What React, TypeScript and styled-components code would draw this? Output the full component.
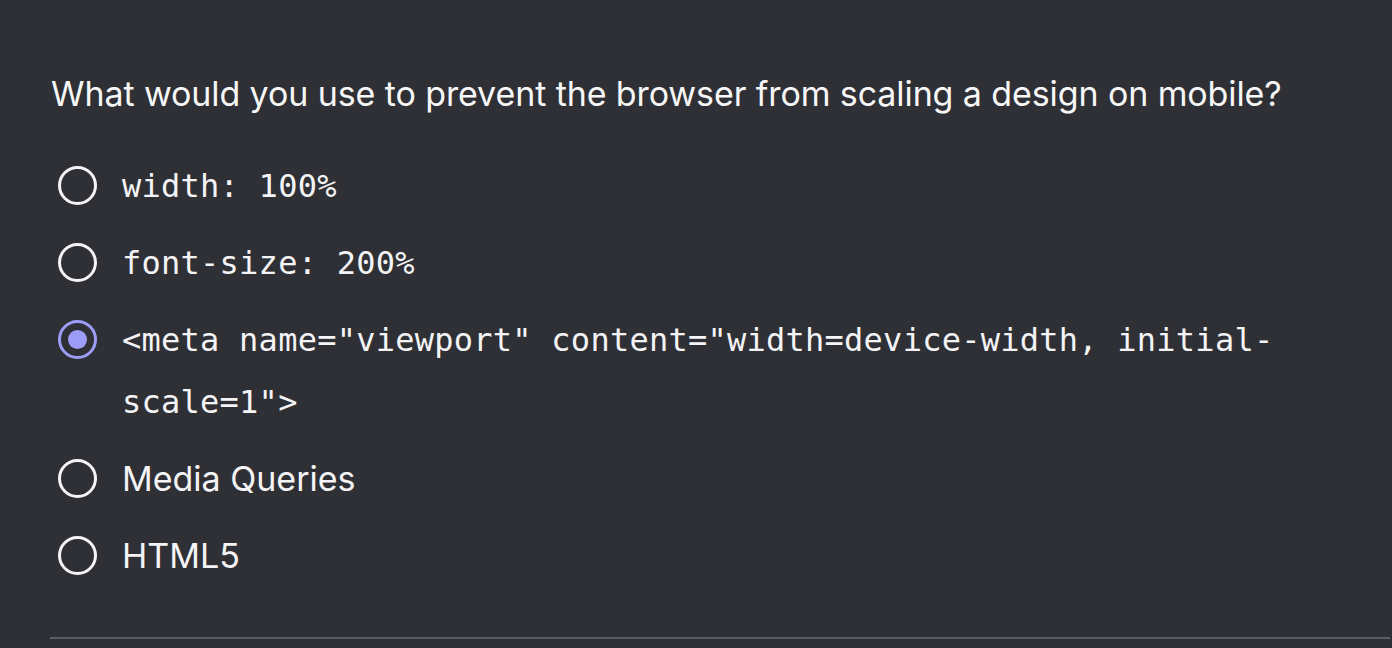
import React from "react";
import styled, { createGlobalStyle } from "styled-components";

const Global = createGlobalStyle`
  html, body { margin: 0; padding: 0; background: #2f3035; }
  body { font-family: Inter, "Liberation Sans", sans-serif; color: #f5f5f7; }
`;

const Page = styled.div`
  width: 1392px;
  height: 648px;
  overflow: hidden;
  background: #2f3035;
  box-sizing: border-box;
  padding: 70px 2px 0 50px;
`;

const Question = styled.h2`
  margin: 0 0 0 1px;
  font-size: 34px;
  font-weight: 400;
  line-height: 48px;
  color: #f7f7f8;
  letter-spacing: -0.1px;
`;

const Options = styled.div`
  display: flex;
  flex-direction: column;
  gap: 15px;
  margin-top: 37px;
  padding-right: 60px;
`;

const Option = styled.label`
  display: flex;
  align-items: flex-start;
  gap: 25px;
  padding-left: 8px;
  cursor: pointer;
`;

const Radio = styled.span<{ $checked?: boolean }>`
  flex: none;
  width: 39px;
  height: 39px;
  margin-top: 11px;
  box-sizing: border-box;
  border-radius: 50%;
  border: 3px solid ${(p) => (p.$checked ? "#9d9cf6" : "#f4f4f6")};
  display: flex;
  align-items: center;
  justify-content: center;
  &::after {
    content: "";
    width: 19px;
    height: 19px;
    border-radius: 50%;
    background: #9d9cf6;
    display: ${(p) => (p.$checked ? "block" : "none")};
  }
`;

const Label = styled.span<{ $mono?: boolean }>`
  font-family: ${(p) =>
    p.$mono ? '"DejaVu Sans Mono", "Liberation Mono", monospace' : 'Inter, "Liberation Sans", sans-serif'};
  font-size: ${(p) => (p.$mono ? "32px" : "34px")};
  line-height: 62px;
  color: #f4f4f6;
  letter-spacing: ${(p) => (p.$mono ? "0.25px" : "0")};
`;

const Divider = styled.hr`
  margin: 50px 0 0 0;
  border: none;
  height: 2px;
  background: #5c5d63;
`;

const options = [
  { text: "width: 100%", mono: true },
  { text: "font-size: 200%", mono: true },
  { text: '<meta name="viewport" content="width=device-width, initial-scale=1">', mono: true, checked: true },
  { text: "Media Queries" },
  { text: "HTML5" },
];

export default function App() {
  return (
    <>
      <Global />
      <Page>
        <Question>What would you use to prevent the browser from scaling a design on mobile?</Question>
        <Options>
          {options.map((o) => (
            <Option key={o.text}>
              <Radio $checked={o.checked} />
              <Label $mono={o.mono}>{o.text}</Label>
            </Option>
          ))}
        </Options>
        <Divider />
      </Page>
    </>
  );
}
